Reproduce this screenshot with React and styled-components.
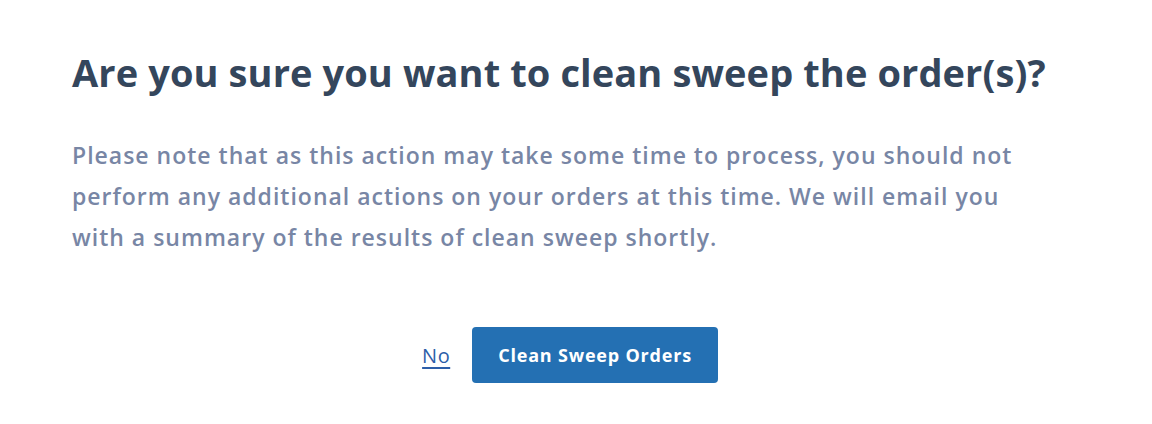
import React from 'react';
import styled, { createGlobalStyle } from 'styled-components';

const GlobalStyle = createGlobalStyle`
  html, body {
    margin: 0;
    padding: 0;
    background: #fff;
  }
  body {
    font-family: "Open Sans", Lato, sans-serif;
  }
`;

const Modal = styled.div`
  width: 1152px;
  height: 424px;
  box-sizing: border-box;
  padding: 46px 84px 0 72px;
  background: #fff;
`;

const Title = styled.h1`
  margin: 0;
  font-size: 38px;
  font-weight: 700;
  line-height: 52px;
  letter-spacing: 0.1px;
  color: #34465c;
`;

const Body = styled.p`
  margin: 37px 0 0;
  max-width: 962px;
  font-size: 23px;
  font-weight: 600;
  line-height: 41px;
  letter-spacing: 1px;
  color: #7886a5;
`;

const Actions = styled.div`
  display: flex;
  justify-content: center;
  align-items: center;
  gap: 22px;
  margin-top: 69px;
`;

const LinkButton = styled.a`
  font-size: 20px;
  letter-spacing: 0.5px;
  color: #2d5ea8;
  text-decoration: underline;
  text-underline-offset: 4px;
  cursor: pointer;
`;

const Primary = styled.button`
  height: 56px;
  padding: 0 26px;
  border: none;
  border-radius: 4px;
  background: #2470b3;
  color: #fff;
  font-family: inherit;
  font-size: 18px;
  font-weight: 700;
  letter-spacing: 0.8px;
  cursor: pointer;
`;

const App = () => (
  <>
    <GlobalStyle />
    <Modal>
      <Title>Are you sure you want to clean sweep the order(s)?</Title>
      <Body>
        Please note that as this action may take some time to process, you should not
        perform any additional actions on your orders at this time. We will email you
        with a summary of the results of clean sweep shortly.
      </Body>
      <Actions>
        <LinkButton>No</LinkButton>
        <Primary>Clean Sweep Orders</Primary>
      </Actions>
    </Modal>
  </>
);

export default App;
